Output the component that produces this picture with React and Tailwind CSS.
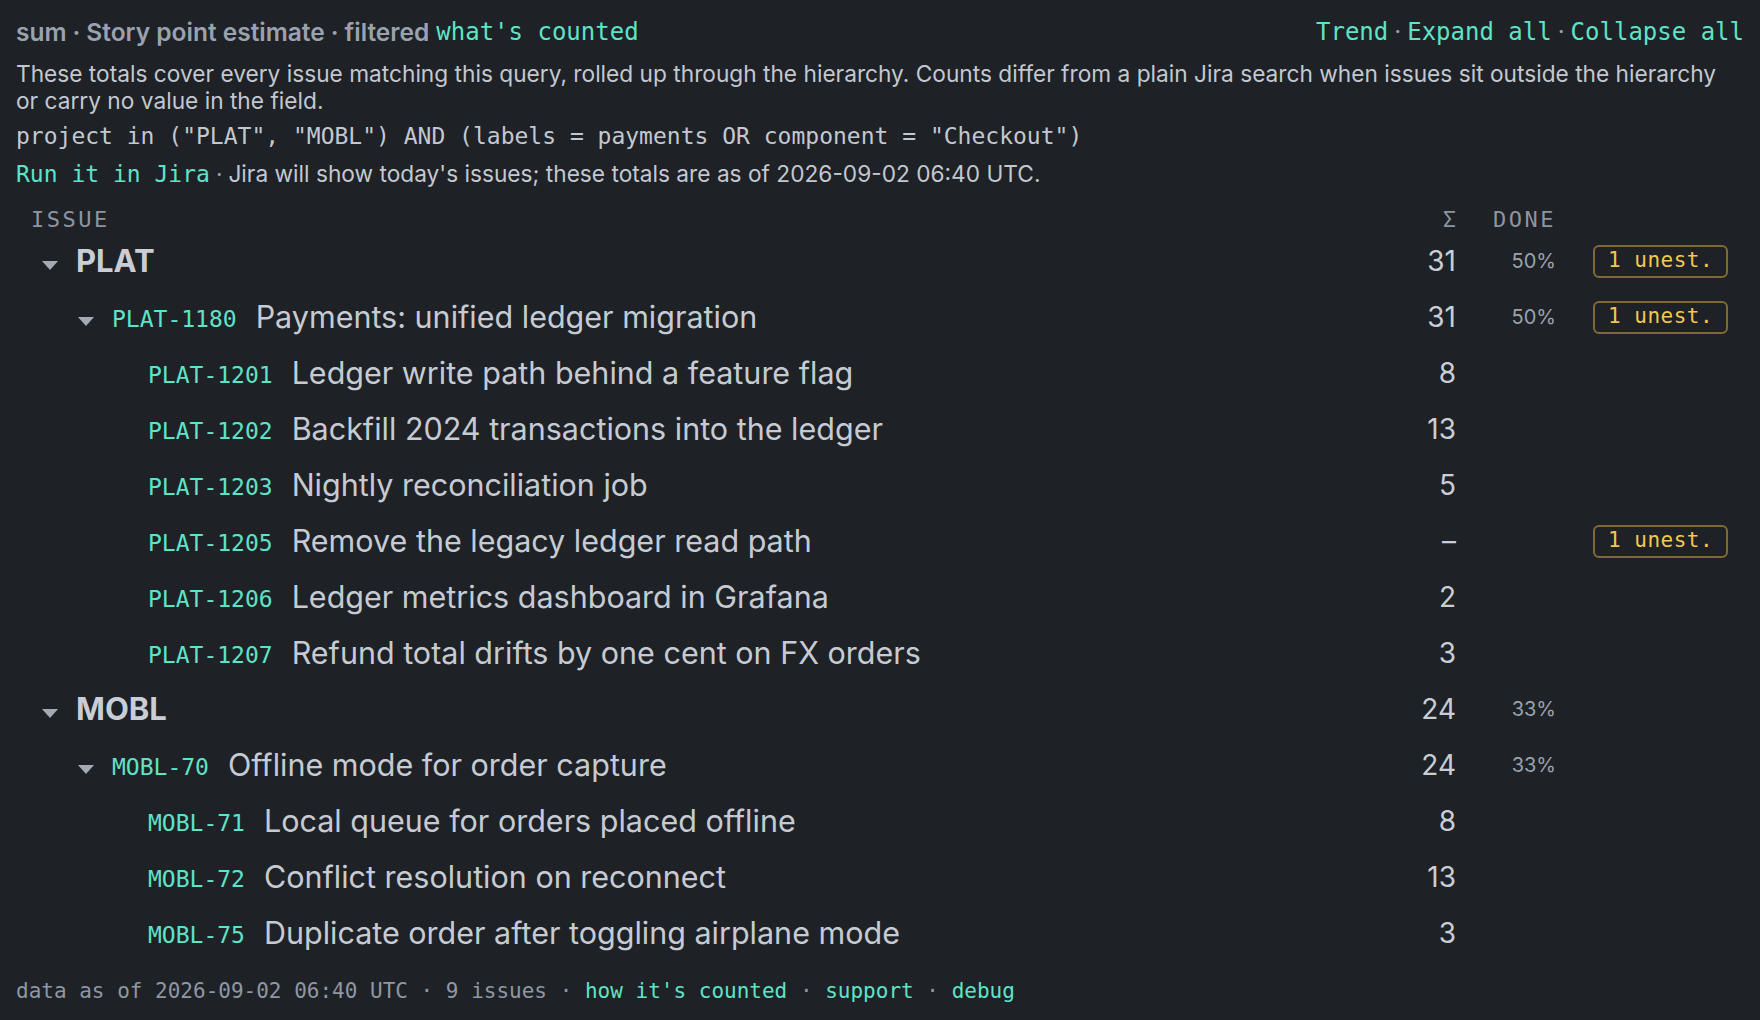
import React from 'react';

const mono = { fontFamily: '"DejaVu Sans Mono", "Liberation Mono", monospace' };

const rows = [
    { depth: 0, title: 'PLAT', sum: '31', done: '50%', unest: true, caret: true },
    { depth: 1, key: 'PLAT-1180', title: 'Payments: unified ledger migration', sum: '31', done: '50%', unest: true, caret: true },
    { depth: 2, key: 'PLAT-1201', title: 'Ledger write path behind a feature flag', sum: '8' },
    { depth: 2, key: 'PLAT-1202', title: 'Backfill 2024 transactions into the ledger', sum: '13' },
    { depth: 2, key: 'PLAT-1203', title: 'Nightly reconciliation job', sum: '5' },
    { depth: 2, key: 'PLAT-1205', title: 'Remove the legacy ledger read path', sum: '–', unest: true },
    { depth: 2, key: 'PLAT-1206', title: 'Ledger metrics dashboard in Grafana', sum: '2' },
    { depth: 2, key: 'PLAT-1207', title: 'Refund total drifts by one cent on FX orders', sum: '3' },
    { depth: 0, title: 'MOBL', sum: '24', done: '33%', caret: true },
    { depth: 1, key: 'MOBL-70', title: 'Offline mode for order capture', sum: '24', done: '33%', caret: true },
    { depth: 2, key: 'MOBL-71', title: 'Local queue for orders placed offline', sum: '8' },
    { depth: 2, key: 'MOBL-72', title: 'Conflict resolution on reconnect', sum: '13' },
    { depth: 2, key: 'MOBL-75', title: 'Duplicate order after toggling airplane mode', sum: '3' },
];

// full class names per depth so tailwind picks them up
const indent = { 0: 'pl-[24px]', 1: 'pl-[60px]', 2: 'pl-[96px]' };

function Caret() {
    return (
        <svg width="16" height="9" viewBox="0 0 16 9" className="ml-[2px] mt-[8px]">
            <path d="M0 0 L16 0 L8 9 Z" fill="#a3aab5" />
        </svg>
    );
}

function Dot() {
    return <span className="text-[#9aa2ae] mx-[6px]" style={{ fontFamily: 'Inter, sans-serif' }}>·</span>;
}

function Badge() {
    return (
        <span
            className="inline-flex items-center h-[33px] px-[13px] rounded-[6px] border-2 border-[#7f6b31] text-[#f4c84a] text-[21px] tracking-[0.5px]"
            style={mono}
        >
            1 unest.
        </span>
    );
}

function Row({ row }) {
    return (
        <div className="grid grid-cols-[1fr_120px_100px_188px] h-[56px] items-center">
            <div className={`flex items-center ${indent[row.depth]}`}>
                <div className="w-[36px] flex items-center">
                    {row.caret && <Caret />}
                </div>
                {row.depth === 0 ? (
                    <span className="text-[31px] font-bold text-[#c9ced6]">{row.title}</span>
                ) : (
                    <>
                        <span className="text-[23px] text-[#5fe3c8] mr-[19px] mt-[4px]" style={mono}>{row.key}</span>
                        <span className="text-[30.5px] text-[#c6cbd3]">{row.title}</span>
                    </>
                )}
            </div>
            <div className="text-right text-[28px] text-[#c9ced6]">{row.sum}</div>
            <div className="text-right text-[20px] text-[#9ba2ad]">{row.done}</div>
            <div className="pl-[37px]">{row.unest && <Badge />}</div>
        </div>
    );
}

export default function App() {
    return (
        <div
            className="min-h-screen bg-[#1e2126] px-4 pt-[18px]"
            style={{ fontFamily: 'Inter, "Noto Sans", sans-serif' }}
        >
            <div className="flex justify-between items-center h-[28px]">
                <div className="flex items-center text-[24.5px] font-semibold text-[#9aa2ae]">
                    sum<Dot />Story point estimate<Dot />filtered
                    <span className="ml-[7px] font-normal text-[#5fe3c8] text-[24px]" style={mono}>what's counted</span>
                </div>
                <div className="flex items-center text-[24px] text-[#5fe3c8]" style={mono}>
                    Trend<Dot />Expand all<Dot />Collapse all
                </div>
            </div>
            <p className="mt-[14px] text-[22.7px] leading-[27px] text-[#c3c8d0]">
                These totals cover every issue matching this query, rolled up through the hierarchy. Counts differ from a plain Jira search when issues sit outside the hierarchy or carry no value in the field.
            </p>
            <div className="mt-[8px] h-[28px] flex items-center text-[23px] text-[#c3c8d0]" style={mono}>
                project in ("PLAT", "MOBL") AND (labels = payments OR component = "Checkout")
            </div>
            <div className="mt-[10px] h-[28px] flex items-center text-[22.7px] text-[#c3c8d0]">
                <span className="text-[23px] text-[#5fe3c8]" style={mono}>Run it in Jira</span>
                <Dot />
                Jira will show today's issues; these totals are as of 2026-09-02 06:40 UTC.
            </div>

            <div className="mt-[15px] grid grid-cols-[1fr_120px_100px_188px] h-[30px] items-center text-[22px] text-[#8d95a1] tracking-[2.5px]" style={mono}>
                <div className="pl-[15px]">ISSUE</div>
                <div className="text-right tracking-normal">Σ</div>
                <div className="text-right">DONE</div>
                <div></div>
            </div>

            <div>
                {rows.map((r, i) => (
                    <Row key={i} row={r} />
                ))}
            </div>

            <div className="mt-[17px] h-[28px] flex items-center text-[21px] text-[#8f97a3]" style={mono}>
                data as of 2026-09-02 06:40 UTC · 9 issues ·&nbsp;
                <span className="text-[#5fe3c8]">how it's counted</span>&nbsp;·&nbsp;
                <span className="text-[#5fe3c8]">support</span>&nbsp;·&nbsp;
                <span className="text-[#5fe3c8]">debug</span>
            </div>
        </div>
    );
}
